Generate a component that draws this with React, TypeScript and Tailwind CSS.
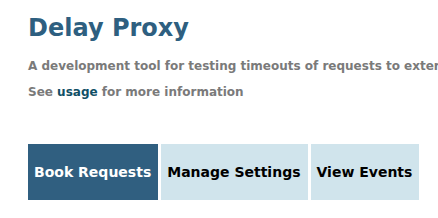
export default function App() {
  return (
    <div className="px-7 pt-3 font-['DejaVu_Sans',sans-serif] bg-white min-h-screen overflow-hidden">
      <h1 className="text-[24px] font-bold text-[#2e5f80] leading-[32px]">Delay Proxy</h1>
      <p className="mt-[14px] text-[12px] font-bold text-[#7a7a7a] whitespace-nowrap leading-[16px]">
        A development tool for testing timeouts of requests to external services
      </p>
      <p className="mt-[10px] text-[12px] font-bold text-[#7a7a7a] leading-[16px]">
        See <a className="text-[#114f66]">usage</a> for more information
      </p>
      <div className="mt-[44px] flex gap-[3px] whitespace-nowrap">
        <div className="shrink-0 h-[56px] pl-[6px] pr-[7px] flex items-center bg-[#305f80] text-white text-[14px] font-bold">Book Requests</div>
        <div className="shrink-0 h-[56px] pl-[6px] pr-[7px] flex items-center bg-[#d0e4ec] text-black text-[14px] font-bold">Manage Settings</div>
        <div className="shrink-0 h-[56px] pl-[6px] pr-[7px] flex items-center bg-[#d0e4ec] text-black text-[14px] font-bold">View Events</div>
      </div>
    </div>
  );
}
